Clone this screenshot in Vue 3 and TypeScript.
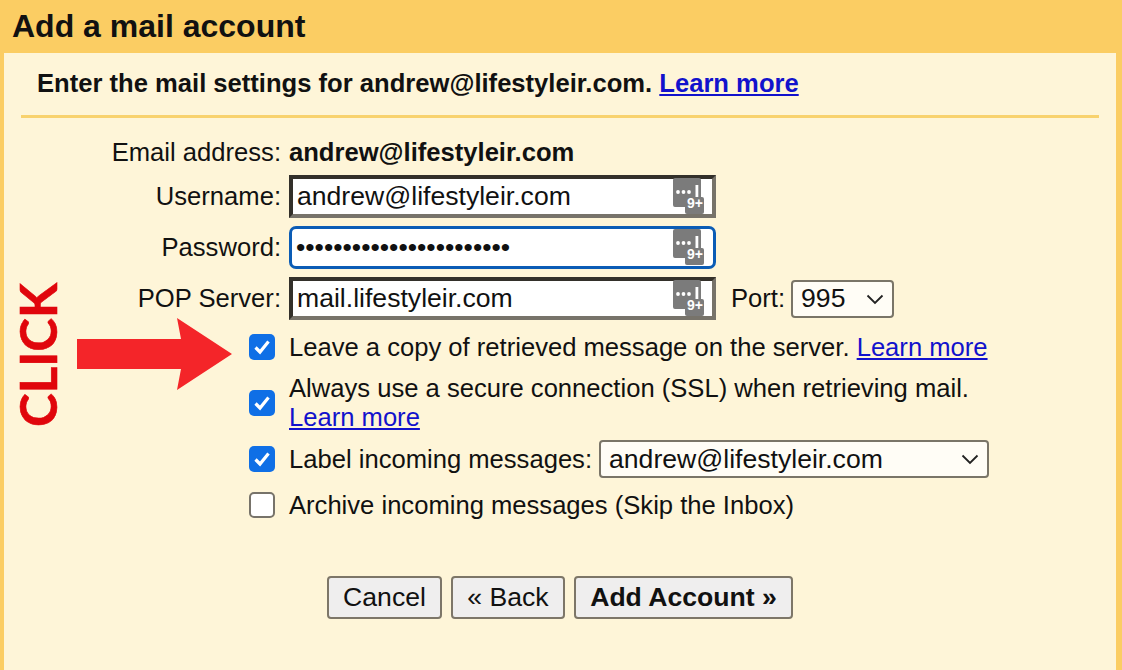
<template>
  <div class="page">
    <h1 class="title">Add a mail account</h1>
    <div class="panel">
      <p class="intro">
        Enter the mail settings for andrew@lifestyleir.com.
        <a href="#" class="link">Learn more</a>
      </p>
      <hr class="rule" />

      <div class="form">
        <span class="lbl email-lbl">Email address:</span>
        <strong class="email-val">andrew@lifestyleir.com</strong>

        <template v-for="field in fields" :key="field.label">
          <label class="lbl">{{ field.label }}</label>
          <div class="field-row">
            <div class="box" :class="{ focused: field.focused }">
              <input class="inp" :type="field.type" :value="field.value" />
              <svg class="pw-icon" :class="{ shifted: field.focused }" width="32" height="36" viewBox="0 0 32 36">
                <path fill="#7b7b7b" d="M3 0h24a2 2 0 0 1 2 2v17h1a2 2 0 0 1 2 2v13a2 2 0 0 1-2 2H15a2 2 0 0 1-2-2v-5H3a2 2 0 0 1-2-2V2a2 2 0 0 1 2-2z" />
                <circle cx="6" cy="14" r="1.9" fill="#fff" />
                <circle cx="11.5" cy="14" r="1.9" fill="#fff" />
                <circle cx="17" cy="14" r="1.9" fill="#fff" />
                <rect x="23.5" y="7" width="2.8" height="12" fill="#fff" />
                <text x="15" y="30" class="pw-text">9+</text>
              </svg>
            </div>
            <template v-if="field.port">
              <span class="port-lbl">Port:</span>
              <div class="sel port-sel">
                <span>995</span>
                <svg class="chev" width="18" height="11" viewBox="0 0 18 11"><path d="M1.5 1.5 9 9l7.5-7.5" fill="none" stroke="#222" stroke-width="1.8" /></svg>
              </div>
            </template>
          </div>
        </template>
      </div>

      <div class="checks">
        <div class="chk-row first">
          <span class="chk on"><svg width="18" height="18" viewBox="0 0 18 18"><path d="M2.5 9.5 7 14l8.5-10.5" fill="none" stroke="#fff" stroke-width="3.2" /></svg></span>
          <span>Leave a copy of retrieved message on the server. <a href="#" class="link">Learn more</a></span>
        </div>
        <div class="chk-row second">
          <span class="chk on"><svg width="18" height="18" viewBox="0 0 18 18"><path d="M2.5 9.5 7 14l8.5-10.5" fill="none" stroke="#fff" stroke-width="3.2" /></svg></span>
          <span>Always use a secure connection (SSL) when retrieving mail.<br /><a href="#" class="link">Learn more</a></span>
        </div>
        <div class="chk-row third">
          <span class="chk on"><svg width="18" height="18" viewBox="0 0 18 18"><path d="M2.5 9.5 7 14l8.5-10.5" fill="none" stroke="#fff" stroke-width="3.2" /></svg></span>
          <span>Label incoming messages:</span>
          <div class="sel label-sel">
            <span>andrew@lifestyleir.com</span>
            <svg class="chev" width="18" height="11" viewBox="0 0 18 11"><path d="M1.5 1.5 9 9l7.5-7.5" fill="none" stroke="#222" stroke-width="1.8" /></svg>
          </div>
        </div>
        <div class="chk-row fourth">
          <span class="chk"></span>
          <span>Archive incoming messages (Skip the Inbox)</span>
        </div>
      </div>

      <div class="buttons">
        <button class="btn cancel">Cancel</button>
        <button class="btn back">« Back</button>
        <button class="btn add">Add Account »</button>
      </div>

      <!-- annotation drawn over the screenshot -->
      <span class="click-text">CLICK</span>
      <svg class="arrow" width="155" height="72" viewBox="0 0 155 72">
        <path fill="#f42529" d="M0 21h104L100 0l55 36-55 36 4-21H0z" />
      </svg>
    </div>
  </div>
</template>

<script setup lang="ts">
interface Field {
  label: string
  value: string
  type: string
  focused?: boolean
  port?: boolean
}

const fields: Field[] = [
  { label: 'Username:', value: 'andrew@lifestyleir.com', type: 'text' },
  { label: 'Password:', value: 'aaaaaaaaaaaaaaaaaaaaaaa', type: 'password', focused: true },
  { label: 'POP Server:', value: 'mail.lifestyleir.com', type: 'text', port: true },
]
</script>

<style>
html,
body {
  margin: 0;
  background: #fef5d8;
}
</style>

<style scoped>
.page {
  width: 1122px;
  height: 670px;
  overflow: hidden;
  display: flex;
  flex-direction: column;
  background: #fbcd63;
  font-family: 'Liberation Sans', Arial, sans-serif;
  font-size: 25.6px;
  color: #111;
}

.title {
  margin: 0;
  height: 53px;
  padding-left: 12px;
  font-size: 32px;
  line-height: 52px;
  font-weight: bold;
  box-sizing: border-box;
}

.panel {
  position: relative;
  flex: 1;
  margin: 0 6px 0 4px;
  padding: 0 17px 0 17px;
  background: #fef5d8;
}

.intro {
  margin: 0;
  padding: 15px 0 0 16px;
  line-height: 30px;
  font-weight: bold;
}

.link {
  color: #1212cc;
  text-decoration: underline;
}

.rule {
  margin: 17px 0 0;
  height: 3px;
  border: 0;
  background: #f8d26e;
}

.form {
  display: grid;
  grid-template-columns: 260px 1fr;
  grid-template-rows: 30px 43px 43px 43px;
  column-gap: 8px;
  row-gap: 8px;
  align-items: center;
  margin-top: 19px;
}

.lbl {
  text-align: right;
}

.email-val {
  font-weight: bold;
}

.field-row {
  display: flex;
  align-items: center;
}

.box {
  position: relative;
  width: 427px;
  height: 43px;
  box-sizing: border-box;
  display: flex;
  align-items: center;
  border-style: solid;
  border-width: 4px;
  border-color: #33302a #77736a #77736a #33302a;
  background: #fff;
}

.box.focused {
  border: 3px solid #0b5cb5;
  border-radius: 7px;
}

.inp {
  flex: 1;
  min-width: 0;
  border: 0;
  outline: 0;
  padding: 0 0 0 4px;
  background: transparent;
  font: inherit;
  font-size: 26.6px;
  color: #111;
}

.pw-icon {
  position: absolute;
  right: 8px;
  top: -1px;
}

.pw-icon.shifted {
  right: 9px;
  top: 0;
}

.pw-text {
  font-size: 14px;
  font-weight: bold;
  fill: #fff;
}

.port-lbl {
  margin-left: 15px;
}

.sel {
  position: relative;
  box-sizing: border-box;
  height: 38px;
  display: flex;
  align-items: center;
  padding-left: 8px;
  border: 2px solid #7a7568;
  border-radius: 4px;
  background: #fffdf6;
  font-size: 26.6px;
}

.chev {
  position: absolute;
  right: 8px;
  top: 12px;
}

.port-sel {
  width: 103px;
  margin-left: 6px;
}

.checks {
  display: flex;
  flex-direction: column;
  margin-left: 228px;
}

.chk-row {
  display: flex;
  align-items: center;
  gap: 14px;
  line-height: 30px;
}

.first {
  margin-top: 12px;
}

.second {
  margin-top: 12px;
  line-height: 29px;
}

.third {
  margin-top: 8px;
}

.fourth {
  margin-top: 12px;
}

.chk {
  flex: none;
  box-sizing: border-box;
  width: 26px;
  height: 26px;
  display: flex;
  align-items: center;
  justify-content: center;
  border: 2px solid #77736a;
  border-radius: 5px;
  background: #fff;
}

.chk.on {
  border: 0;
  background: #0f6fe6;
}

.label-sel {
  width: 390px;
  margin-left: -7px;
}

.buttons {
  display: flex;
  gap: 9px;
  margin: 56px 0 0 306px;
}

.btn {
  height: 43px;
  box-sizing: border-box;
  padding: 0;
  border: 2px solid #7d7668;
  border-radius: 4px;
  background: #efeeee;
  font: inherit;
  font-size: 26.6px;
  color: #111;
}

.cancel {
  width: 115px;
}

.back {
  width: 114px;
}

.add {
  width: 219px;
  font-weight: bold;
}

.click-text {
  position: absolute;
  left: -38px;
  top: 277px;
  font-family: Lato, sans-serif;
  font-size: 51px;
  font-weight: 700;
  line-height: 50px;
  color: #e0060c;
  -webkit-text-stroke: 0.6px #e0060c;
  transform: rotate(-90deg);
}

.arrow {
  position: absolute;
  left: 73px;
  top: 265px;
}
</style>
